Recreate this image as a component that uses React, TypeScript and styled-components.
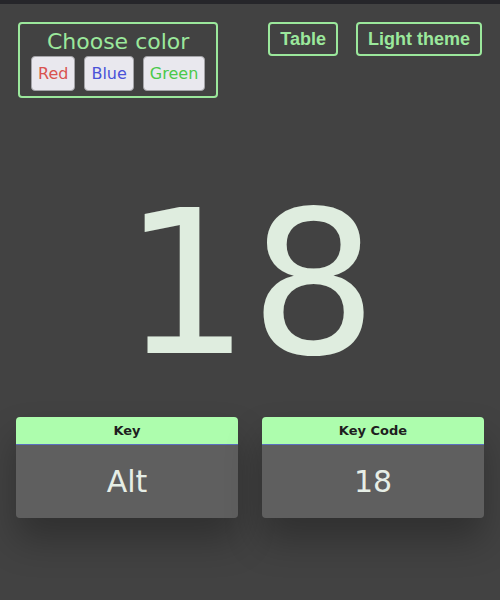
import React from 'react';
import styled, { createGlobalStyle } from 'styled-components';

const vars = {
  bg: '#424242',
  strip: '#26262a',
  green: '#9be89c',
  headerGreen: '#adfdad',
  digit: '#dfeddf',
  cardBody: '#5f5f5f',
};

const GlobalStyle = createGlobalStyle`
  html, body {
    margin: 0;
    padding: 0;
    background: ${vars.bg};
    font-family: "DejaVu Sans", sans-serif;
  }
`;

const Page = styled.main`
  background: ${vars.bg};
  min-height: 600px;
  border-top: 4px solid ${vars.strip};
  box-sizing: border-box;
  display: flex;
  flex-direction: column;
`;

const TopRow = styled.header`
  display: flex;
  justify-content: space-between;
  align-items: flex-start;
  padding: 18px 18px 0;
`;

const Chooser = styled.section`
  border: 2px solid ${vars.green};
  border-radius: 4px;
  padding: 3px 11px 5px;
  display: flex;
  flex-direction: column;
  align-items: center;
`;

const ChooserTitle = styled.div`
  color: ${vars.green};
  font-size: 22px;
  line-height: 29px;
`;

const Swatches = styled.div`
  display: flex;
  gap: 9px;
`;

const Swatch = styled.button<{ $tone: string }>`
  font-family: "DejaVu Sans", sans-serif;
  font-size: 16px;
  height: 35px;
  padding: 0 6px;
  color: ${(p) => p.$tone};
  background: #e9e8ee;
  border: 1px solid #a4a4a8;
  border-radius: 4px;
`;

const Actions = styled.nav`
  display: flex;
  gap: 18px;
`;

const OutlineButton = styled.button`
  font-family: "Liberation Sans", Arial, sans-serif;
  font-weight: bold;
  font-size: 18px;
  height: 34px;
  padding: 0 10px;
  color: ${vars.green};
  background: transparent;
  border: 2px solid ${vars.green};
  border-radius: 4px;
`;

const BigNumber = styled.div`
  color: ${vars.digit};
  font-size: 200px;
  line-height: 233px;
  text-align: center;
  margin: 69px 0 17px;
`;

const Cards = styled.section`
  display: grid;
  grid-template-columns: 1fr 1fr;
  gap: 24px;
  padding: 0 16px;
`;

const Card = styled.div`
  border-radius: 4px;
  overflow: hidden;
  box-shadow: 0 22px 36px rgba(0, 0, 0, 0.28);
`;

const CardHeader = styled.div`
  background: ${vars.headerGreen};
  border-bottom: 1px solid #5b6fbf;
  height: 27px;
  line-height: 28px;
  text-align: center;
  font-size: 13px;
  font-weight: bold;
  color: #1e1e1e;
`;

const CardBody = styled.div`
  background: ${vars.cardBody};
  height: 73px;
  display: flex;
  align-items: center;
  justify-content: center;
  color: #e6eee6;
  font-size: 30px;
`;

const App: React.FC = () => {
  return (
    <>
      <GlobalStyle />
      <Page>
        <TopRow>
          <Chooser>
            <ChooserTitle>Choose color</ChooserTitle>
            <Swatches>
              <Swatch $tone="#d9534f">Red</Swatch>
              <Swatch $tone="#4a52d8">Blue</Swatch>
              <Swatch $tone="#4cc94c">Green</Swatch>
            </Swatches>
          </Chooser>
          <Actions>
            <OutlineButton>Table</OutlineButton>
            <OutlineButton>Light theme</OutlineButton>
          </Actions>
        </TopRow>

        <BigNumber>18</BigNumber>

        <Cards>
          <Card>
            <CardHeader>Key</CardHeader>
            <CardBody>Alt</CardBody>
          </Card>
          <Card>
            <CardHeader>Key Code</CardHeader>
            <CardBody>18</CardBody>
          </Card>
        </Cards>
      </Page>
    </>
  );
};

export default App;
